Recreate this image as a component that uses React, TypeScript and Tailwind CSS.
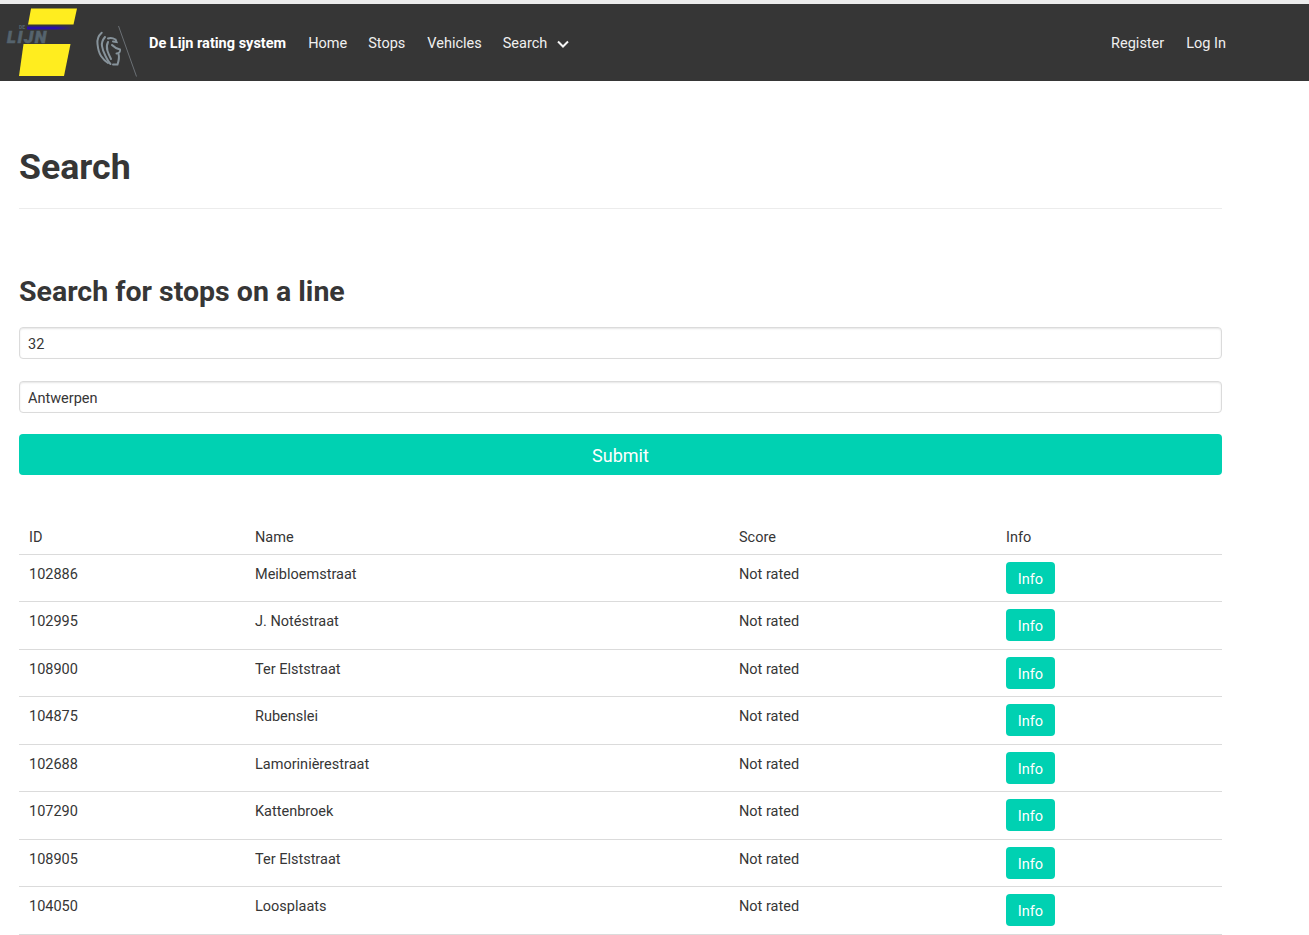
const stops = [
  { id: "102886", name: "Meibloemstraat" },
  { id: "102995", name: "J. Notéstraat" },
  { id: "108900", name: "Ter Elststraat" },
  { id: "104875", name: "Rubenslei" },
  { id: "102688", name: "Lamorinièrestraat" },
  { id: "107290", name: "Kattenbroek" },
  { id: "108905", name: "Ter Elststraat" },
  { id: "104050", name: "Loosplaats" },
];

function Logo() {
  return (
    <div className="relative w-[137px] h-[77px] shrink-0">
      <svg width="137" height="77" viewBox="0 0 137 77" className="absolute left-0 top-0">
        <defs>
          <linearGradient id="stripe" x1="0" x2="1" y1="0" y2="0">
            <stop offset="0" stopColor="#2a0fa8" />
            <stop offset="0.6" stopColor="#2a0fa8" />
            <stop offset="1" stopColor="#2a0fa8" stopOpacity="0" />
          </linearGradient>
        </defs>
        <polygon points="31,4.5 77,4.5 73.5,20.5 28,20.5" fill="#ffed1f" />
        <polygon points="23.5,40 70.5,40 64,72 19,72" fill="#ffed1f" />
        <rect x="27" y="22.5" width="47" height="3" fill="url(#stripe)" />
        <path d="M118.5 22 L136.5 72.5" stroke="#6b7075" strokeWidth="1" fill="none" />
        {/* Flemish lion */}
        <g fill="none" stroke="#87939b" strokeWidth="2" strokeLinecap="round">
          <path d="M101.7 28.7 C98 32 97 36 97.5 40 C98 45 99 49 101 52 C103 55 105 57 108 59" />
          <path d="M105 33 C102.5 36 101.5 39 102 42 C102.5 46 104 49 105.5 52 C107 55 108.5 58 110.5 60" />
          <path d="M108 38 C106.5 41 106.5 44 107.5 47 C108.5 50 109.5 52 111 55" />
          <path d="M108 34.5 C110.5 33.5 113 34 115.5 35.5 L116.5 38 L113 37.5" />
          <path d="M112 41 C114 43 116 44.5 120 45.5 C120.5 48 119 49.5 116.5 49.5" />
          <path d="M118.5 50 C119.5 53 119 56 117.5 60.5 L113 60.5" />
        </g>
      </svg>
      <span className="absolute left-[19px] top-[21px] text-[5px] leading-[5px] font-black text-[#55636d]">DE</span>
      <span className="absolute left-[7px] top-[26px] text-[17px] leading-[14px] font-black italic tracking-[1.5px] text-[#55636d] [-webkit-text-stroke:0.5px_#55636d]">
        LIJN
      </span>
    </div>
  );
}

export default function App() {
  return (
    <div className="min-h-[935px] bg-white text-[#363636] font-['Roboto',sans-serif] text-[14.5px] overflow-hidden">
      <div className="h-[4px] bg-[#ececec]" />
      <nav className="h-[77px] bg-[#363636] flex items-center text-[#f0f0f0] pr-[83px]">
        <Logo />
        <a className="ml-[12px] pt-[2px] font-bold text-white">De Lijn rating system</a>
        <a className="ml-[22px] pt-[2px]">Home</a>
        <a className="ml-[21px] pt-[2px]">Stops</a>
        <a className="ml-[22px] pt-[2px]">Vehicles</a>
        <a className="ml-[21px] pt-[2px] flex items-center">
          Search
          <svg width="12" height="8" viewBox="0 0 12 8" className="ml-[10px] mt-[1px]" fill="none" stroke="#f5f5f5" strokeWidth="2">
            <path d="M1 1.5 L6 6.5 L11 1.5" />
          </svg>
        </a>
        <a className="ml-auto pt-[2px]">Register</a>
        <a className="ml-[22px] pt-[2px]">Log In</a>
      </nav>

      <main className="ml-[19px] w-[1203px]">
        <h1 className="mt-[64px] text-[35.7px] leading-[45px] font-bold">Search</h1>
        <hr className="mt-[18px] border-0 h-[1px] bg-[#ececec]" />
        <h2 className="mt-[65px] text-[28.5px] leading-[36px] font-bold">Search for stops on a line</h2>

        <input
          readOnly
          value="32"
          className="mt-[17px] block w-full h-[32px] px-[8px] pt-[2px] border border-[#dbdbdb] rounded-[4px] shadow-[inset_0_1px_2px_rgba(10,10,10,0.1)] text-[14.5px] text-[#363636] outline-none"
        />
        <input
          readOnly
          value="Antwerpen"
          className="mt-[22px] block w-full h-[32px] px-[8px] pt-[2px] border border-[#dbdbdb] rounded-[4px] shadow-[inset_0_1px_2px_rgba(10,10,10,0.1)] text-[14.5px] text-[#363636] outline-none"
        />
        <button className="mt-[21px] block w-full h-[41px] pt-[2px] rounded-[4px] bg-[#00d1b2] text-white text-[18px]">
          Submit
        </button>

        <table className="mt-[46px] w-full table-fixed border-collapse">
          <colgroup>
            <col className="w-[226px]" />
            <col className="w-[484px]" />
            <col className="w-[267px]" />
            <col />
          </colgroup>
          <thead>
            <tr className="h-[33px] border-b border-[#dbdbdb]">
              <th className="px-[10px] pt-[2px] text-left font-normal">ID</th>
              <th className="px-[10px] pt-[2px] text-left font-normal">Name</th>
              <th className="px-[10px] pt-[2px] text-left font-normal">Score</th>
              <th className="px-[10px] pt-[2px] text-left font-normal">Info</th>
            </tr>
          </thead>
          <tbody>
            {stops.map((stop) => (
              <tr key={stop.id} className="h-[47.5px] border-b border-[#dbdbdb]">
                <td className="px-[10px] pt-[8px] align-top leading-[24px]">{stop.id}</td>
                <td className="px-[10px] pt-[8px] align-top leading-[24px]">{stop.name}</td>
                <td className="px-[10px] pt-[8px] align-top leading-[24px]">Not rated</td>
                <td className="px-[10px] pt-[7px] align-top leading-[0]">
                  <button className="w-[49px] h-[32px] pt-[4px] rounded-[4px] bg-[#00d1b2] text-white text-[14.5px] leading-[28px]">
                    Info
                  </button>
                </td>
              </tr>
            ))}
          </tbody>
        </table>
      </main>
    </div>
  );
}
